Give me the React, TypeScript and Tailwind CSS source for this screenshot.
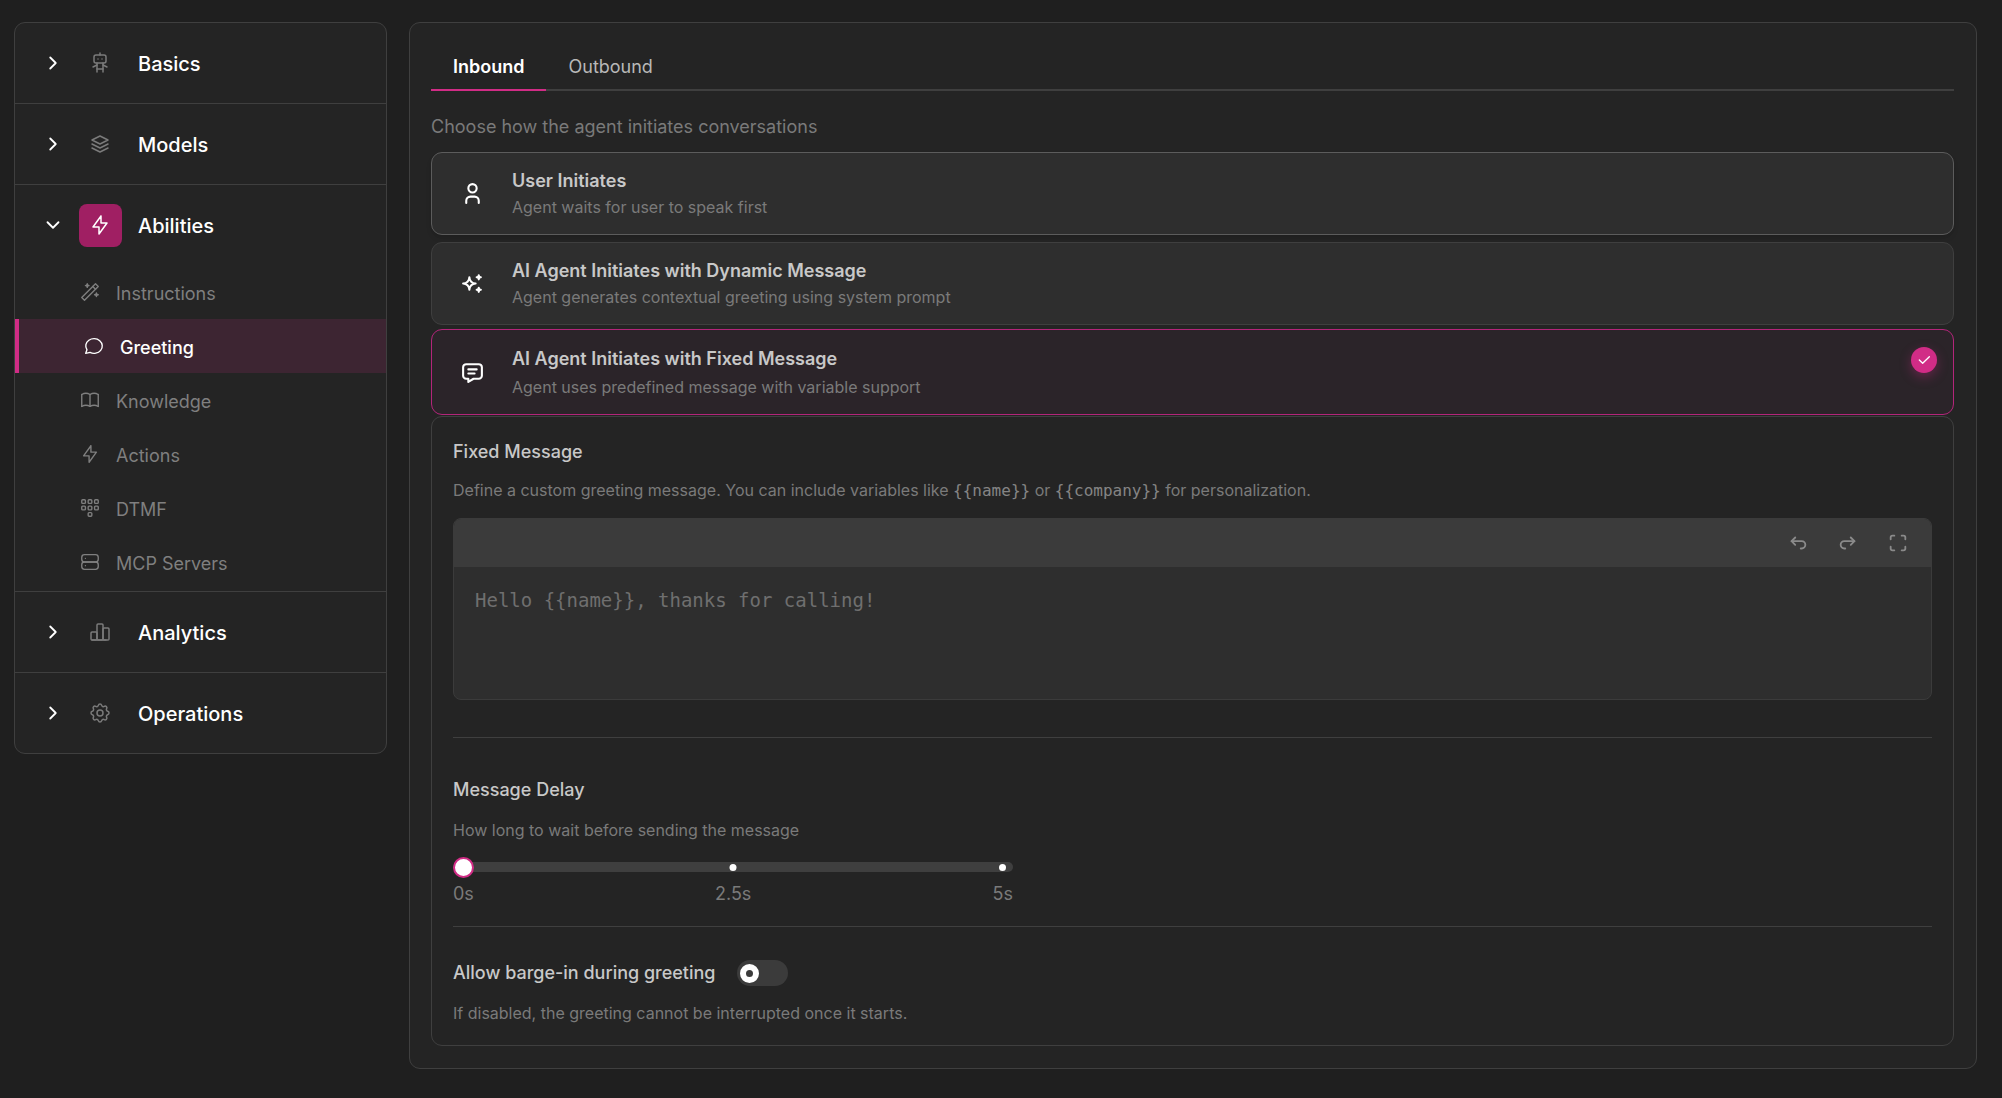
import { useState } from "react";
import {
  TbArrowBackUp,
  TbArrowForwardUp,
  TbBolt,
  TbBook,
  TbCheck,
  TbChevronDown,
  TbChevronRight,
  TbDialpad,
  TbMaximize,
  TbMessage,
  TbMessageCircle,
  TbRobot,
  TbServer,
  TbSettings,
  TbSparkles,
  TbStack2,
  TbUser,
  TbWand,
} from "react-icons/tb";

// Three joined bars, drawn on the same 24px grid as the other icons
function BarsIcon({ size = 24, strokeWidth = 2 }: { size?: number; strokeWidth?: number }) {
  return (
    <svg
      width={size}
      height={size}
      viewBox="0 0 24 24"
      fill="none"
      stroke="currentColor"
      strokeWidth={strokeWidth}
      strokeLinecap="round"
      strokeLinejoin="round"
    >
      <path d="M3 13a1 1 0 0 1 1 -1h4a1 1 0 0 1 1 1v6a1 1 0 0 1 -1 1h-4a1 1 0 0 1 -1 -1z" />
      <path d="M9 5a1 1 0 0 1 1 -1h4a1 1 0 0 1 1 1v14a1 1 0 0 1 -1 1h-4a1 1 0 0 1 -1 -1z" />
      <path d="M15 9a1 1 0 0 1 1 -1h4a1 1 0 0 1 1 1v10a1 1 0 0 1 -1 1h-4a1 1 0 0 1 -1 -1z" />
      <path d="M4 20h14" />
    </svg>
  );
}

const abilities = [
  { label: "Instructions", icon: TbWand },
  { label: "Greeting", icon: TbMessageCircle },
  { label: "Knowledge", icon: TbBook },
  { label: "Actions", icon: TbBolt },
  { label: "DTMF", icon: TbDialpad },
  { label: "MCP Servers", icon: TbServer },
];

const sections = [
  { label: "Basics", icon: TbRobot },
  { label: "Models", icon: TbStack2 },
  { label: "Abilities", icon: TbBolt, items: abilities },
  { label: "Analytics", icon: BarsIcon },
  { label: "Operations", icon: TbSettings },
];

const modes = [
  {
    id: "user",
    title: "User Initiates",
    description: "Agent waits for user to speak first",
    icon: TbUser,
    card: "mb-[7px] h-[83px] border-[#5c5c5c] bg-[#2e2e2e] shadow-md",
    text: "pt-px",
  },
  {
    id: "dynamic",
    title: "AI Agent Initiates with Dynamic Message",
    description: "Agent generates contextual greeting using system prompt",
    icon: TbSparkles,
    card: "mb-1 h-[83px] border-[#3f3f3f] bg-[#2e2e2e]",
    text: "pt-px",
  },
  {
    id: "fixed",
    title: "AI Agent Initiates with Fixed Message",
    description: "Agent uses predefined message with variable support",
    icon: TbMessage,
    card: "h-[86px] border-[#b3257a] bg-[#2b2429]",
    text: "gap-0.5 pt-0.5",
  },
];

function Sidebar() {
  const [open, setOpen] = useState("Abilities");
  const [active, setActive] = useState("Greeting");

  return (
    <nav className="w-[373px] shrink-0 divide-y divide-[#3f3f3f] overflow-hidden rounded-[11px] border border-[#3f3f3f] bg-[#242424]">
      {sections.map((section) => {
        const Icon = section.icon;
        const isOpen = open === section.label;
        return (
          <div key={section.label}>
            <button
              type="button"
              aria-expanded={isOpen}
              onClick={() => setOpen(isOpen ? "" : section.label)}
              className="flex h-20 w-full items-center pl-[27px] text-left text-white"
            >
              {isOpen ? <TbChevronDown size={22} /> : <TbChevronRight size={22} />}
              <span
                className={`ml-[15px] flex size-[43px] items-center justify-center rounded-lg pr-px ${
                  isOpen ? "bg-[#a01f63] text-white" : "text-[#7a7a7a]"
                }`}
              >
                <Icon size={24} strokeWidth={1.5} />
              </span>
              <span className="ml-4 pt-0.5 text-[20px] font-medium">{section.label}</span>
            </button>
            {section.items && isOpen && (
              <ul className="pb-0.5">
                {section.items.map((item) => {
                  const ItemIcon = item.icon;
                  const isActive = active === item.label;
                  return (
                    <li key={item.label}>
                      <button
                        type="button"
                        onClick={() => setActive(item.label)}
                        className={`flex h-[54px] w-full items-center gap-[15px] pl-16 text-left text-[18px] ${
                          isActive
                            ? "border-l-4 border-[#d12c86] bg-[#3d2532] font-medium text-white"
                            : "text-[#7f7f7f]"
                        }`}
                      >
                        <ItemIcon size={22} strokeWidth={1.5} />
                        <span className="pt-[3px]">{item.label}</span>
                      </button>
                    </li>
                  );
                })}
              </ul>
            )}
          </div>
        );
      })}
    </nav>
  );
}

function Tabs() {
  const [tab, setTab] = useState("Inbound");
  return (
    <div role="tablist" className="flex border-b-2 border-[#3f3f3f]">
      {["Inbound", "Outbound"].map((name) => (
        <button
          key={name}
          type="button"
          role="tab"
          aria-selected={tab === name}
          onClick={() => setTab(name)}
          className={`-mb-0.5 h-[47px] border-b-2 px-[22px] text-[18px] ${
            tab === name
              ? "border-[#d12c86] font-semibold text-white"
              : "border-transparent text-[#b8b8b8]"
          }`}
        >
          {name}
        </button>
      ))}
    </div>
  );
}

function ModePicker() {
  const [mode, setMode] = useState("fixed");
  return (
    <fieldset>
      <legend className="pt-[22px] pb-[11px] text-[18px] leading-7 text-[#7a7a7a]">
        Choose how the agent initiates conversations
      </legend>
      {modes.map((m) => {
        const Icon = m.icon;
        return (
          <label
            key={m.id}
            className={`relative flex items-center rounded-[11px] border pr-4 pl-7 ${m.card}`}
          >
            <input
              type="radio"
              name="mode"
              value={m.id}
              checked={mode === m.id}
              onChange={() => setMode(m.id)}
              className="sr-only"
            />
            <Icon size={25} className="shrink-0 text-white" />
            <span className={`ml-[27px] flex flex-1 flex-col ${m.text}`}>
              <span className="text-[18px] leading-[26px] font-semibold text-[#c8c8c8]">{m.title}</span>
              <span className="text-[16px] leading-[26px] text-[#7a7a7a]">{m.description}</span>
            </span>
            {mode === m.id && (
              <span className="mt-[17px] flex size-[26px] items-center justify-center self-start rounded-full bg-[#d12c86] text-white shadow-[0_4px_12px_rgba(209,44,134,0.35)]">
                <TbCheck size={16} />
              </span>
            )}
          </label>
        );
      })}
    </fieldset>
  );
}

function MessageEditor() {
  const tools = [
    { label: "Undo", icon: TbArrowBackUp },
    { label: "Redo", icon: TbArrowForwardUp },
    { label: "Fullscreen", icon: TbMaximize },
  ];
  return (
    <div className="mt-3.5 overflow-hidden rounded-lg border border-[#3b3b3b] bg-[#2e2e2e]">
      <div className="flex h-12 items-center justify-end gap-7 bg-[#3b3b3b] pr-[22px] text-[#8a8a8a]">
        {tools.map((t) => (
          <button key={t.label} type="button" aria-label={t.label}>
            <t.icon size={22} />
          </button>
        ))}
      </div>
      <textarea
        id="fixed-message"
        placeholder="Hello {{name}}, thanks for calling!"
        className="block h-[132px] w-full resize-none px-[21px] py-[19px] font-['DejaVu_Sans_Mono',monospace] text-[19px] leading-7 text-[#c8c8c8] outline-none placeholder:text-[#6f6f6f]"
      />
    </div>
  );
}

function DelaySlider() {
  const [delay, setDelay] = useState(0);
  return (
    <div className="w-[560px]">
      <div className="relative flex h-[22px] items-center">
        <input
          id="delay"
          type="range"
          min={0}
          max={5}
          step={0.5}
          value={delay}
          onChange={(e) => setDelay(Number(e.target.value))}
          className="h-2.5 w-full appearance-none rounded-full bg-[#3f3f3f] [&::-webkit-slider-thumb]:size-[21px] [&::-webkit-slider-thumb]:appearance-none [&::-webkit-slider-thumb]:rounded-full [&::-webkit-slider-thumb]:border-2 [&::-webkit-slider-thumb]:border-[#d12c86] [&::-webkit-slider-thumb]:bg-white"
        />
        <span className="pointer-events-none absolute left-1/2 size-[7px] -translate-x-1/2 rounded-full bg-white" />
        <span className="pointer-events-none absolute right-[7px] size-[7px] rounded-full bg-white" />
      </div>
      <div className="mt-1 flex justify-between text-[18px] leading-6 text-[#7a7a7a]">
        <span>0s</span>
        <span>2.5s</span>
        <span>5s</span>
      </div>
    </div>
  );
}

function FixedMessagePanel() {
  const [bargeIn, setBargeIn] = useState(false);
  return (
    <section className="mt-px rounded-[11px] border border-[#3f3f3f] px-[21px] pt-[21px] pb-[19px]">
      <label htmlFor="fixed-message" className="block text-[18px] leading-7 font-medium text-[#c8c8c8]">
        Fixed Message
      </label>
      <p className="mt-[11px] text-[16px] leading-[26px] text-[#7a7a7a]">
        Define a custom greeting message. You can include variables like{" "}
        <code className="font-['DejaVu_Sans_Mono',monospace] text-[#858585]">{"{{name}}"}</code> or{" "}
        <code className="font-['DejaVu_Sans_Mono',monospace] text-[#858585]">{"{{company}}"}</code> for
        personalization.
      </p>
      <MessageEditor />

      <hr className="mt-[37px] border-[#3f3f3f]" />

      <label htmlFor="delay" className="mt-[38px] block text-[18px] leading-7 font-medium text-[#c8c8c8]">
        Message Delay
      </label>
      <p className="my-[13px] text-[16px] leading-[26px] text-[#7a7a7a]">
        How long to wait before sending the message
      </p>
      <DelaySlider />

      <hr className="mt-5 border-[#3f3f3f]" />

      <div className="mt-8 flex items-center gap-[21px]">
        <label htmlFor="barge-in" className="text-[18px] leading-7 font-medium text-[#c8c8c8]">
          Allow barge-in during greeting
        </label>
        <input
          id="barge-in"
          type="checkbox"
          role="switch"
          checked={bargeIn}
          onChange={(e) => setBargeIn(e.target.checked)}
          className="flex h-[26px] w-[51px] appearance-none items-center rounded-full bg-[#3b3b3b] px-[3px] before:size-[19px] before:rounded-full before:border-[6px] before:border-white checked:justify-end checked:bg-[#d12c86]"
        />
      </div>
      <p className="mt-[13px] text-[16px] leading-[26px] text-[#7a7a7a]">
        If disabled, the greeting cannot be interrupted once it starts.
      </p>
    </section>
  );
}

export default function App() {
  return (
    <div className="flex min-h-screen items-start gap-[22px] bg-[#1f1f1f] pt-[22px] pr-[25px] pb-7 pl-3.5 font-['Inter','Liberation_Sans',sans-serif]">
      <Sidebar />
      <main className="min-w-0 flex-1 rounded-[11px] border border-[#3f3f3f] bg-[#242424] pt-[21px] pr-[22px] pb-[22px] pl-[21px]">
        <Tabs />
        <ModePicker />
        <FixedMessagePanel />
      </main>
    </div>
  );
}
